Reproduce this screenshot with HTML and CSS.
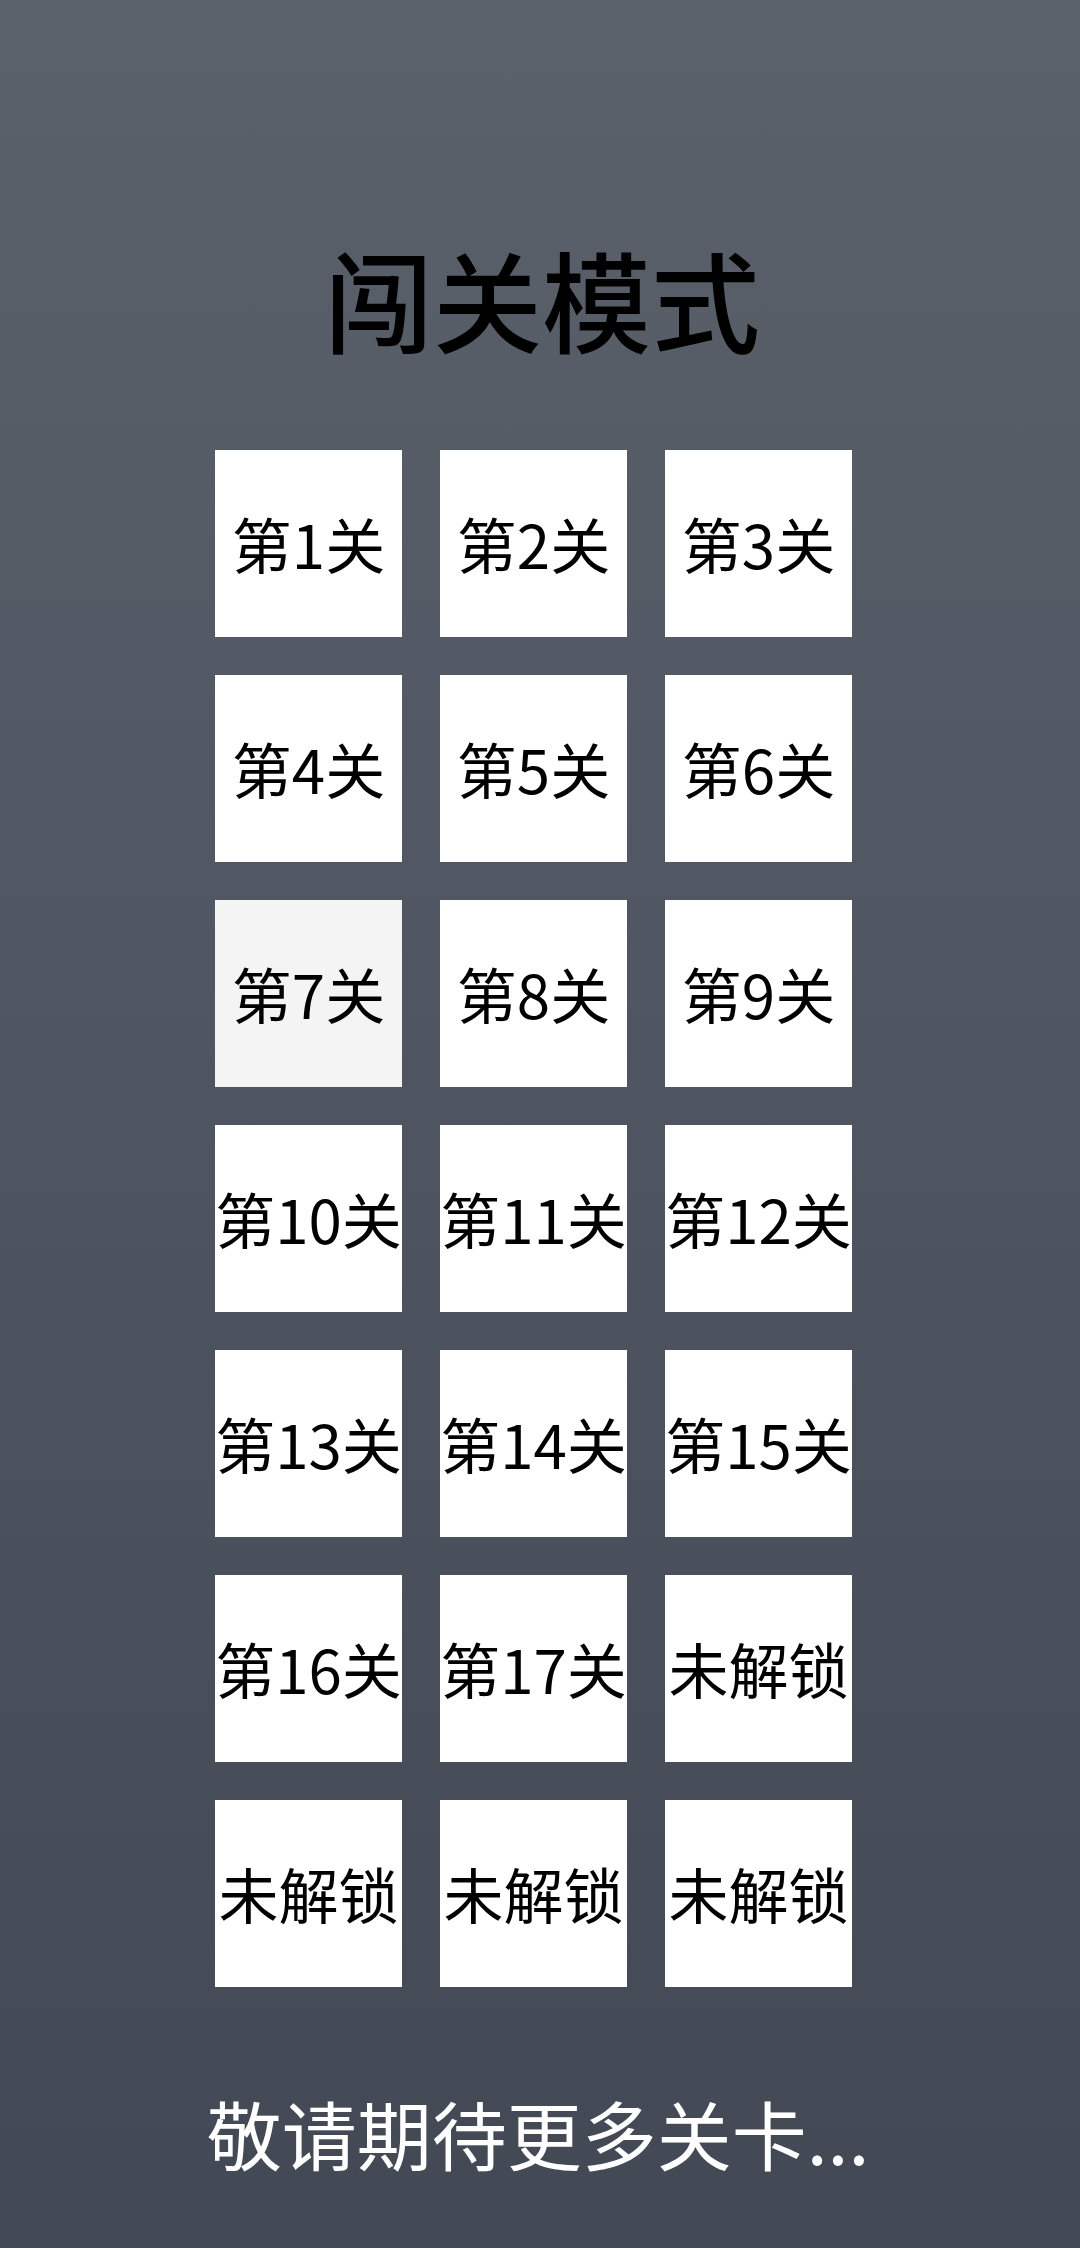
FILE: index.html
```html
<!DOCTYPE html>
<html lang="zh-CN">
<head>
<meta charset="utf-8">
<title>闯关模式</title>
<link rel="stylesheet" href="styles.css">
</head>
<body>
<main class="screen">
  <h1 class="title">闯关模式</h1>
  <div class="levels">
    <div class="level">第1关</div>
    <div class="level">第2关</div>
    <div class="level">第3关</div>
    <div class="level">第4关</div>
    <div class="level">第5关</div>
    <div class="level">第6关</div>
    <div class="level level-pressed">第7关</div>
    <div class="level">第8关</div>
    <div class="level">第9关</div>
    <div class="level">第10关</div>
    <div class="level">第11关</div>
    <div class="level">第12关</div>
    <div class="level">第13关</div>
    <div class="level">第14关</div>
    <div class="level">第15关</div>
    <div class="level">第16关</div>
    <div class="level">第17关</div>
    <div class="level">未解锁</div>
    <div class="level">未解锁</div>
    <div class="level">未解锁</div>
    <div class="level">未解锁</div>
  </div>
  <p class="more">敬请期待更多关卡...</p>
</main>
</body>
</html>
```
FILE: styles.css
```css
html, body {
  margin: 0;
  padding: 0;
}
body {
  width: 1080px;
  height: 2248px;
  overflow: hidden;
  background: linear-gradient(to bottom, #5b616b 0%, #4e5560 50%, #434954 100%);
  font-family: "Noto Sans CJK SC", "Noto Sans", sans-serif;
}
.screen {
  display: flex;
  flex-direction: column;
  align-items: center;
  padding-top: 242px;
}
.title {
  margin: 0;
  padding-left: 4px;
  font-size: 109px;
  line-height: 112px;
  font-weight: 500;
  color: #000;
}
.levels {
  margin-top: 96px;
  margin-right: 13px;
  display: grid;
  grid-template-columns: repeat(3, 187px);
  grid-auto-rows: 187px;
  gap: 38px;
}
.level {
  background: #ffffff;
  color: #000;
  display: flex;
  align-items: center;
  justify-content: center;
  padding-bottom: 2px;
  font-size: 60px;
  line-height: 1;
  white-space: nowrap;
}
.level-pressed {
  background: #f4f4f4;
}
.more {
  margin: 110px 0 0;
  font-size: 75px;
  line-height: 72px;
  color: #fff;
  padding-right: 4px;
}
```
